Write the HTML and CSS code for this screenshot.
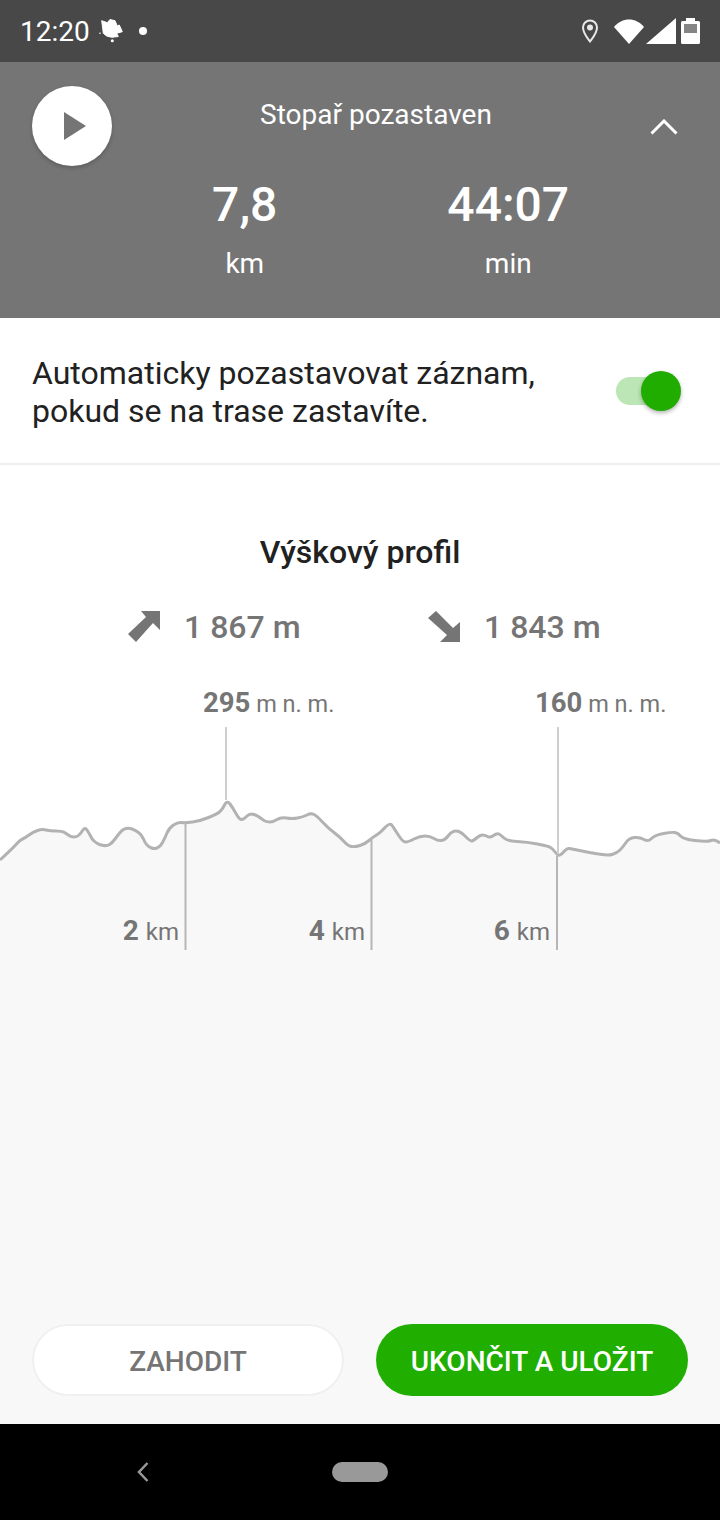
FILE: index.html
```html
<!DOCTYPE html>
<html lang="cs">
<head>
    <meta charset="UTF-8">
    <meta name="viewport" content="width=device-width, initial-scale=1.0">
    <title>Stopař pozastaven</title>
    <link rel="stylesheet" href="styles.css">
</head>
<body>
    <div class="status-bar">
        <span class="status-time">12:20</span>
        <svg class="status-leaf" width="24" height="24" viewBox="0 0 24 24">
            <path fill="#fff" stroke="#fff" stroke-linejoin="round" d="M2.700 1.700L8.300 3.700 11 .5 16 1.700 18.300 7 20.300 6 23.300 12.700 17.700 14.300 19.300 17.500 12.700 18.300 7.700 17 4.300 14.300 3.700 9.300z"/>
            <circle cx="1" cy="14.300" r="0.800" fill="#fff"/>
            <circle cx="13.300" cy="21.700" r="1.500" fill="#fff"/>
        </svg>
        <span class="status-dot"></span>
        <span class="status-right">
            <svg width="16" height="24" viewBox="0 0 16 24">
                <path fill="none" stroke="#e8e8e8" stroke-width="2" d="M8 22.500C5 18.500 1 14 1 8.500a7 7 0 0 1 14 0C15 14 11 18.500 8 22.500z"/>
                <circle cx="8" cy="8.500" r="3" fill="#e8e8e8"/>
            </svg>
            <svg class="status-wifi" width="30" height="25" viewBox="0 0 30 25">
                <path fill="#fff" d="M0 8C8 -2 22 -2 30 8L15 25z"/>
            </svg>
            <svg class="status-signal" width="30" height="26" viewBox="0 0 30 26">
                <path fill="#fff" d="M30 0v26H0z"/>
            </svg>
            <svg class="status-battery" width="19" height="26" viewBox="0 0 19 26">
                <path fill="#fff" d="M5 0h9v3h3.500a1.500 1.500 0 0 1 1.500 1.500V24.500a1.500 1.500 0 0 1-1.500 1.500H1.500A1.500 1.500 0 0 1 0 24.500V4.500A1.500 1.500 0 0 1 1.500 3H5z"/>
                <rect x="3" y="6" width="13" height="9" fill="#858585"/>
            </svg>
        </span>
    </div>

    <header class="tracker">
        <button class="play-button">
            <svg width="22" height="28" viewBox="0 0 22 28"><path fill="#757575" d="M0 0l22 14L0 28z"/></svg>
        </button>
        <div class="tracker-main">
            <div class="tracker-title">Stopař pozastaven</div>
            <div class="tracker-stats">
                <div class="stat">
                    <div class="stat-value">7,8</div>
                    <div class="stat-unit">km</div>
                </div>
                <div class="stat">
                    <div class="stat-value">44:07</div>
                    <div class="stat-unit">min</div>
                </div>
            </div>
        </div>
        <div class="tracker-toggle">
            <svg width="28" height="16" viewBox="0 0 28 16"><path fill="none" stroke="#fff" stroke-width="3" d="M1.500 14.500L14 2l12.500 12.500"/></svg>
        </div>
    </header>

    <section class="auto-pause">
        <p class="auto-pause-text">Automaticky pozastavovat záznam, pokud se na trase zastavíte.</p>
        <div class="switch"><span class="switch-thumb"></span></div>
    </section>

    <main class="profile">
        <h2 class="profile-title">Výškový profil</h2>
        <div class="profile-totals">
            <div class="total">
                <svg width="34" height="34" viewBox="0 0 34 34"><path fill="#757575" d="M14 1H33V20L26 13 9 32 1 24 19 7z"/></svg>
                <span>1 867 m</span>
            </div>
            <div class="total">
                <svg width="34" height="34" viewBox="0 0 34 34"><path fill="#757575" d="M9 1L26 18 33 12V32H13L20 25 1 8z"/></svg>
                <span>1 843 m</span>
            </div>
        </div>

        <div class="chart">
            <svg class="chart-svg" viewBox="0 680 720 744" width="720" height="744">
                <path fill="#f8f8f8" d="M0 860Q13 848 16.500 844T22.500 839T29 835T37.500 830.500T46 830T56 831T64.500 832.500T69 835.500T74 837T79 835T83 830T87 830T90.500 836T93.500 840.500T97.500 843.500T103.500 845.500T109.500 844.500T115 839T120.500 832T126 828.500T132 829T138.500 832.500T143.500 839T147 845T151.500 848T157 848T162.500 842.500T167 833T173.500 825T181.500 822.500T192.500 822T208.500 817.500T219.500 812T224.500 805T230 804T236 813.500T241 819.500T246.500 816.500T254 814.500T260.500 818T265 821T270 822T277 819.500T286.500 818T297.500 818T307 815T314 814.500T322.500 822T334 832.500T344 841.500T351.500 846.500T360 845.500T369 840.500T376.500 835T385 827.500T392.500 826T399 836T405.500 842T414 839T425 836T434 838.500T441.500 840.500T448.500 835.500T456 831T465 836T471.500 841T476.500 838T482.500 835T487.500 836.500T493.500 835.500T499 834T504 838T517 841.500T537.500 844T550.500 847.500T555.500 852.500T560 855T564.500 851T569.500 848.500T589.500 852.500T612 854.500T620 850T626 842.500T634.500 837.500T644 839.500T651.500 838.500T663.500 833.500T675 832.500T680.500 836T695 840.500T711 840.500T720 843V1424H0z"/>
                <path fill="none" stroke="#b2b2b2" stroke-width="3" stroke-linejoin="round" d="M0 860Q13 848 16.500 844T22.500 839T29 835T37.500 830.500T46 830T56 831T64.500 832.500T69 835.500T74 837T79 835T83 830T87 830T90.500 836T93.500 840.500T97.500 843.500T103.500 845.500T109.500 844.500T115 839T120.500 832T126 828.500T132 829T138.500 832.500T143.500 839T147 845T151.500 848T157 848T162.500 842.500T167 833T173.500 825T181.500 822.500T192.500 822T208.500 817.500T219.500 812T224.500 805T230 804T236 813.500T241 819.500T246.500 816.500T254 814.500T260.500 818T265 821T270 822T277 819.500T286.500 818T297.500 818T307 815T314 814.500T322.500 822T334 832.500T344 841.500T351.500 846.500T360 845.500T369 840.500T376.500 835T385 827.500T392.500 826T399 836T405.500 842T414 839T425 836T434 838.500T441.500 840.500T448.500 835.500T456 831T465 836T471.500 841T476.500 838T482.500 835T487.500 836.500T493.500 835.500T499 834T504 838T517 841.500T537.500 844T550.500 847.500T555.500 852.500T560 855T564.500 851T569.500 848.500T589.500 852.500T612 854.500T620 850T626 842.500T634.500 837.500T644 839.500T651.500 838.500T663.500 833.500T675 832.500T680.500 836T695 840.500T711 840.500T720 843"/>
                <path fill="none" stroke="#cfcfcf" stroke-width="2" d="M226 727V800M558 727V854"/>
                <path fill="none" stroke="#b6b6b6" stroke-width="2" d="M185.500 823V950M371.500 838V950M557 856V950"/>
            </svg>
            <div class="chart-label peak peak-a"><b>295</b> m n. m.</div>
            <div class="chart-label peak peak-b"><b>160</b> m n. m.</div>
            <div class="chart-label dist dist-2"><b>2</b> km</div>
            <div class="chart-label dist dist-4"><b>4</b> km</div>
            <div class="chart-label dist dist-6"><b>6</b> km</div>

            <div class="actions">
                <button class="btn btn-discard"><span>ZAHODIT</span></button>
                <button class="btn btn-save"><span>UKONČIT A ULOŽIT</span></button>
            </div>
        </div>
    </main>

    <nav class="nav-bar">
        <svg class="nav-back" width="12" height="20" viewBox="0 0 12 20"><path fill="none" stroke="#999" stroke-width="2.500" d="M10.500 1L2 10l8.500 9"/></svg>
        <span class="nav-home"></span>
    </nav>
</body>
</html>
```

FILE: styles.css
```css
* {
    box-sizing: border-box;
}
html, body {
    height: 100%;
}
body {
    margin: 0;
    display: flex;
    flex-direction: column;
    height: 1520px;
    font-family: Roboto, "Liberation Sans", sans-serif;
    background-color: white;
    overflow: hidden;
}

/* status bar */
.status-bar {
    display: flex;
    align-items: center;
    height: 62px;
    padding: 0 20px;
    background-color: #484848;
    color: white;
    flex-shrink: 0;
}
.status-time {
    font-size: 28px;
    width: 79px;
}
.status-leaf {
    margin-right: 16px;
}
.status-dot {
    width: 8px;
    height: 8px;
    border-radius: 50%;
    background-color: white;
}
.status-right {
    margin-left: auto;
    display: flex;
    align-items: center;
}
.status-wifi {
    margin-left: 16px;
}
.status-signal {
    margin-left: 2px;
}
.status-battery {
    margin-left: 5px;
}

/* tracker header */
.tracker {
    display: flex;
    height: 256px;
    padding: 24px 32px 0;
    background-color: #757575;
    color: white;
    flex-shrink: 0;
}
.play-button {
    width: 80px;
    height: 80px;
    padding: 0 0 0 6px;
    border: none;
    border-radius: 50%;
    background-color: white;
    box-shadow: 0 2px 4px rgba(0, 0, 0, 0.2);
    display: flex;
    align-items: center;
    justify-content: center;
    flex-shrink: 0;
}
.tracker-main {
    width: 528px;
    text-align: center;
}
.tracker-title {
    font-size: 28px;
    line-height: 34px;
    margin-top: 12px;
}
.tracker-stats {
    display: grid;
    grid-template-columns: 1fr 1fr;
    margin-top: 41px;
    padding-left: 1px;
}
.stat-value {
    font-size: 48px;
    font-weight: 500;
    line-height: 64px;
}
.stat-unit {
    font-size: 28px;
    line-height: 36px;
    margin-top: 9px;
}
.tracker-toggle {
    width: 48px;
    text-align: center;
    padding-top: 33px;
    line-height: 0;
}

/* auto pause row */
.auto-pause {
    display: flex;
    align-items: center;
    justify-content: space-between;
    height: 147px;
    padding: 3px 44px 0 32px;
    border-bottom: 2px solid #eeeeee;
    flex-shrink: 0;
}
.auto-pause-text {
    margin: 0;
    width: 530px;
    font-size: 32px;
    line-height: 38px;
    color: #212121;
}
.switch {
    position: relative;
    width: 60px;
    height: 28px;
    border-radius: 14px;
    background-color: #bce6b5;
    margin-bottom: 2px;
}
.switch-thumb {
    position: absolute;
    right: -5px;
    top: -6px;
    width: 40px;
    height: 40px;
    border-radius: 50%;
    background-color: #20ad00;
    box-shadow: 0 2px 4px rgba(0, 0, 0, 0.3);
}

/* profile */
.profile {
    flex: 1;
    display: flex;
    flex-direction: column;
    min-height: 0;
}
.profile-title {
    margin: 67px 0 0;
    font-size: 32px;
    font-weight: 500;
    line-height: 40px;
    text-align: center;
    color: #212121;
}
.profile-totals {
    display: flex;
    height: 40px;
    margin-top: 35px;
    margin-bottom: 33px;
    padding-left: 127px;
}
.total {
    display: flex;
    flex: none;
    align-items: center;
    gap: 23px;
    width: 300px;
    font-size: 32px;
    font-weight: 500;
    color: #757575;
}
.total svg {
    flex-shrink: 0;
}
.chart {
    position: relative;
    flex: 1;
    min-height: 0;
}
.chart-svg {
    position: absolute;
    left: 0;
    top: 0;
}
.chart-label {
    position: absolute;
    font-size: 24px;
    line-height: 32px;
    white-space: nowrap;
    color: #757575;
}
.chart-label b {
    font-size: 28px;
    font-weight: 700;
}
.peak {
    top: 7px;
    font-size: 23.500px;
}
.peak b {
    font-size: 27.500px;
}
.peak-a {
    left: 203px;
}
.peak-b {
    left: 535px;
}
.dist {
    top: 235px;
}
.dist b {
    margin-right: 1px;
}
.dist-2 {
    right: 541px;
}
.dist-4 {
    right: 355px;
}
.dist-6 {
    right: 170px;
}
.actions {
    position: absolute;
    left: 32px;
    right: 32px;
    bottom: 28px;
    display: grid;
    grid-template-columns: 312px 312px;
    gap: 32px;
}
.btn {
    height: 72px;
    padding: 2px 0 0;
    border-radius: 36px;
    font-family: inherit;
    font-size: 28px;
    font-weight: 500;
    display: flex;
    align-items: center;
    justify-content: center;
}
.btn-discard {
    background-color: white;
    border: 2px solid #f0f0f0;
    color: #757575;
}
.btn-save {
    background-color: #20ae00;
    border: none;
    color: white;
}

/* nav bar */
.nav-bar {
    position: relative;
    height: 96px;
    background-color: black;
    flex-shrink: 0;
}
.nav-back {
    position: absolute;
    left: 137px;
    top: 38px;
}
.nav-home {
    position: absolute;
    left: 332px;
    top: 38px;
    width: 56px;
    height: 20px;
    border-radius: 10px;
    background-color: #999;
}
```
